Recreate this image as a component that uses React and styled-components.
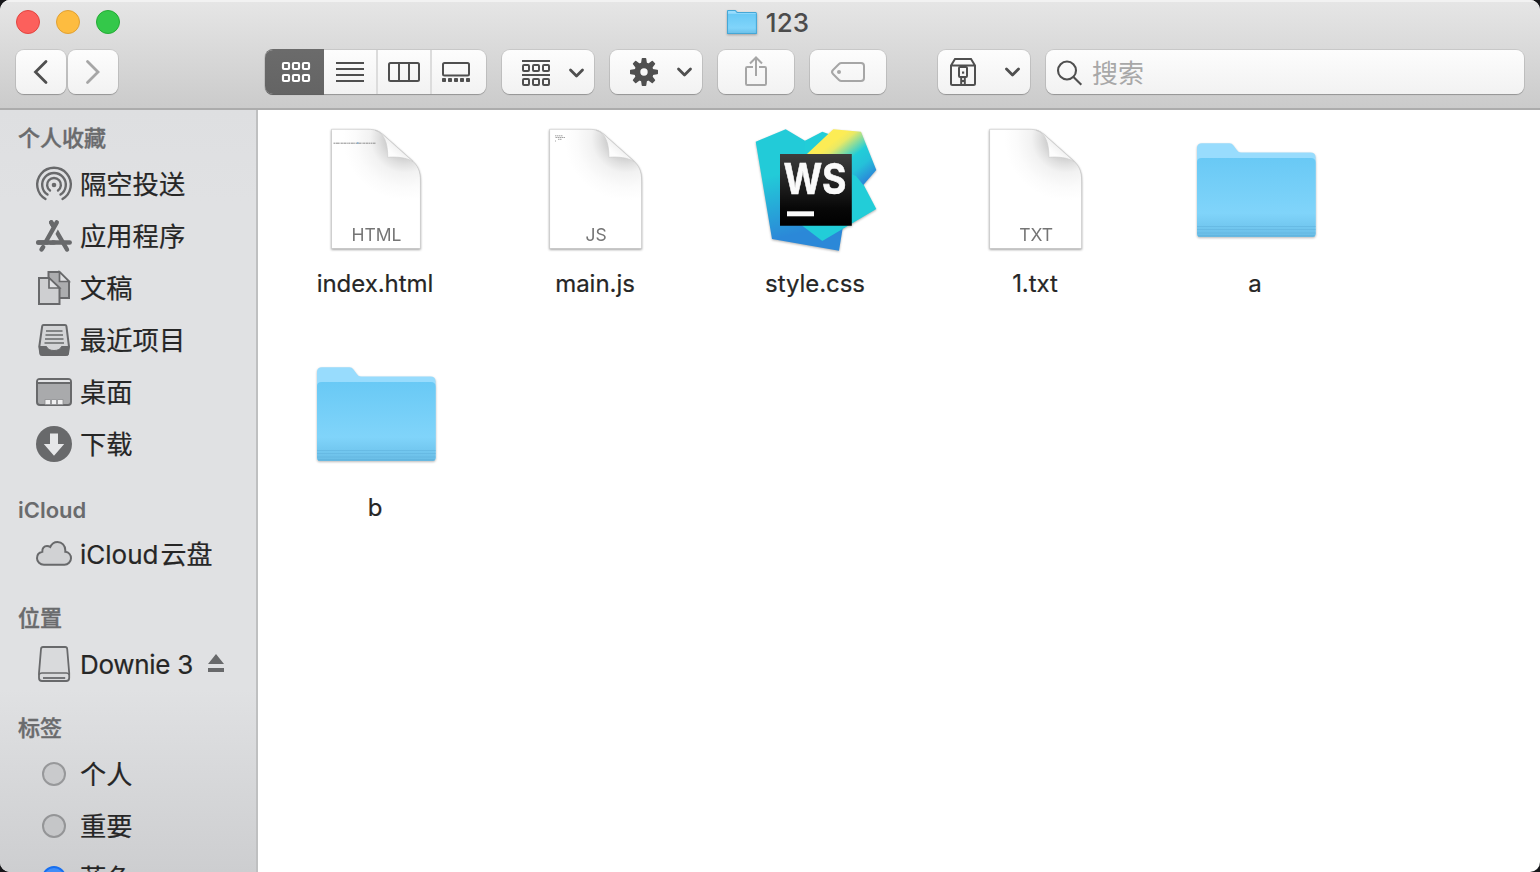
import React from "react";
import styled, { createGlobalStyle } from "styled-components";

const Global = createGlobalStyle`
  * { box-sizing: border-box; }
  body { margin: 0; background: #17171a; overflow: hidden; }
  svg { display: block; flex: none; overflow: visible; }
`;

const font = `Inter, "Noto Sans CJK SC", sans-serif`;
const ink = "#4f4f4f";
const faint = "#a6a6a6";
const side = "#68696b";

const Window = styled.div`
  width: 1540px;
  height: 872px;
  display: flex;
  flex-direction: column;
  overflow: hidden;
  border-radius: 10px;
  background: #fff;
  font-family: ${font};
  color: #262626;
`;

const Header = styled.header`
  height: 110px;
  flex: none;
  border-bottom: 2px solid #acacac;
  background: linear-gradient(#e6e6e6, #cbcbcb);
  box-shadow: inset 0 2px 0 #f2f2f2;
`;

const TitleRow = styled.div`
  position: relative;
  height: 44px;
  display: flex;
  align-items: center;
  justify-content: center;
  gap: 9px;
  padding-right: 4px;
`;

const Lights = styled.div`
  position: absolute;
  left: 16px;
  top: 10px;
  display: flex;
  gap: 16px;
`;

const Light = styled.span`
  width: 24px;
  height: 24px;
  border-radius: 50%;
  background: ${(p) => p.$fill};
  border: 1px solid ${(p) => p.$edge};
`;

const Title = styled.h1`
  margin: 2px 0 0;
  font-size: 26px;
  font-weight: 500;
  line-height: 32px;
  letter-spacing: 0.2px;
  color: #4c4c4c;
`;

const Toolbar = styled.div`
  display: flex;
  gap: 16px;
  padding: 6px 16px 0;
`;

const surface = `
  background: linear-gradient(#fdfdfd, #f2f2f2);
  box-shadow: 0 0 0 1px rgba(0, 0, 0, 0.08), 0 1px 1px 0 rgba(0, 0, 0, 0.22);
`;

const ButtonPair = styled.div`
  display: flex;
  gap: 2px;
  margin-right: 131px;
`;

const ToolButton = styled.button`
  width: ${(p) => p.$w}px;
  height: 44px;
  flex: none;
  display: flex;
  align-items: center;
  justify-content: ${(p) => (p.$menu ? "space-between" : "center")};
  padding: ${(p) => p.$pad || "0"};
  margin-left: ${(p) => p.$before || 0}px;
  border: 0;
  border-radius: 8px;
  ${surface}
`;

const Segments = styled.div`
  display: flex;
  width: 221px;
  height: 44px;
  border-radius: 8px;
  ${surface}
`;

const Segment = styled.button`
  width: ${(p) => p.$w}px;
  display: flex;
  align-items: center;
  justify-content: center;
  padding: ${(p) => p.$pad || "0"};
  border: 0;
  border-left: ${(p) => (p.$line ? "2px solid #dcdcdc" : "0")};
  background: transparent;
  ${(p) =>
    p.$on &&
    `background: linear-gradient(#6b6b6b, #646464); border-radius: 8px 0 0 8px; box-shadow: 0 -1px 0 #6b6b6b, 0 1px 0 #606060;`}
`;

const Search = styled.div`
  flex: 1;
  height: 44px;
  display: flex;
  align-items: center;
  gap: 10px;
  padding-left: 11px;
  border-radius: 8px;
  font-size: 26px;
  line-height: 40px;
  color: #a8a8a8;
  ${surface}
`;

const Placeholder = styled.span`
  margin-top: 4px;
`;

const Body = styled.div`
  flex: 1;
  min-height: 0;
  display: flex;
`;

const Sidebar = styled.nav`
  width: 258px;
  flex: none;
  overflow: hidden;
  border-right: 2px solid #bfc0c1;
  background: linear-gradient(#dedfe1, #e0e1e3 12%, #e0e1e3 76%, #cdced0);
`;

const Group = styled.section`
  padding-top: ${(p) => (p.$first ? 11 : 20)}px;
`;

const GroupTitle = styled.h2`
  margin: 0 0 4px;
  padding-left: 18px;
  height: 34px;
  font-size: 22px;
  font-weight: ${(p) => (p.$latin ? 600 : 500)};
  line-height: ${(p) => (p.$latin ? 38 : 34)}px;
  -webkit-text-stroke: ${(p) => (p.$latin ? 0 : 0.4)}px #6a6b6d;
  color: #6a6b6d;
`;

const Item = styled.div`
  height: 52px;
  display: flex;
  align-items: center;
  gap: 8px;
  padding-left: 36px;
  font-size: 26px;
  line-height: 40px;
  white-space: nowrap;
`;

const TagDot = styled.span`
  width: 24px;
  height: 24px;
  flex: none;
  margin: 0 6px 2px;
  border-radius: 50%;
  background: ${(p) => p.$fill};
  border: 2px solid ${(p) => p.$edge};
`;

const ItemLabel = styled.span`
  font-size: ${(p) => (p.$latin ? 26 : 26.3)}px;
  letter-spacing: ${(p) => p.$track || 0}px;
  -webkit-text-stroke: 0.2px #262626;
`;

const Thin = styled.span`
  margin-left: 2px;
`;

const EjectSlot = styled.span`
  margin-left: 7px;
  margin-top: -4px;
`;

const Files = styled.main`
  flex: 1;
  display: grid;
  grid-template-columns: repeat(5, 220px);
  grid-auto-rows: 224px;
  align-content: start;
  padding: 16px 0 0 8px;
`;

const File = styled.div`
  display: flex;
  flex-direction: column;
  align-items: center;
`;

const FileName = styled.span`
  margin: 14px 2px 0 0;
  font-size: 24px;
  line-height: 32px;
  letter-spacing: -0.05px;
  color: #262626;
  -webkit-text-stroke: 0.2px #262626;
`;

const Chevron = () => (
  <svg width="16" height="10" viewBox="-0.5 0 16 10" fill="none" stroke={ink} strokeWidth="2.8" strokeLinecap="round" strokeLinejoin="round">
    <path d="M2 2l6 6 6-6" />
  </svg>
);

const Arrow = ({ right }) => (
  <svg width="14" height="24" viewBox="0.5 0 14 24" fill="none" stroke={right ? faint : ink} strokeWidth="2.8" strokeLinecap="round" strokeLinejoin="miter">
    <path d={right ? "M2 1.5L12.500 12 2 22.5" : "M12.5 1.5L2 12l10.500 10.500"} />
  </svg>
);

const Cells = ({ y }) => [1, 11, 21].map((x) => <rect key={x} x={x} y={y} width="6" height="6" rx="1" />);

const GridIcon = () => (
  <svg width="28" height="20" fill="none" stroke="#fff" strokeWidth="2.2">
    <Cells y={1} />
    <Cells y={13} />
  </svg>
);

const ListIcon = () => (
  <svg width="28" height="20" fill={ink}>
    {[0, 6, 12, 18].map((y) => <rect key={y} y={y} width="28" height="2" />)}
  </svg>
);

const ColumnsIcon = () => (
  <svg width="32" height="20" fill="none" stroke={ink} strokeWidth="2">
    <rect x="1" y="1" width="30" height="18" rx="1.5" />
    <path d="M11 1v18M21 1v18" />
  </svg>
);

const GalleryIcon = () => (
  <svg width="28" height="20" fill={ink}>
    <rect x="1" y="1" width="26" height="12.500" rx="1.500" fill="none" stroke={ink} strokeWidth="2" />
    {[0, 6, 12, 18, 24].map((x) => <rect key={x} x={x} y="16" width="4" height="4" rx="0.800" />)}
  </svg>
);

const ArrangeIcon = () => (
  <svg width="28" height="26" fill="none" stroke={ink} strokeWidth="2">
    <path d="M0 1h28M0 15h28" />
    <Cells y={5} />
    <Cells y={19} />
  </svg>
);

const GearIcon = () => (
  <svg width="28" height="28" viewBox="-14 -14 28 28" fill={ink}>
    {[0, 45, 90, 135, 180, 225, 270, 315].map((a) => (
      <path key={a} d="M-3.200-7L-2.300-13.300Q-2.200-14-1.500-14H1.500Q2.200-14 2.300-13.300L3.200-7Z" transform={`rotate(${a})`} />
    ))}
    <circle r="6.700" fill="none" stroke={ink} strokeWidth="6" />
  </svg>
);

const ShareIcon = () => (
  <svg width="22" height="30" fill="none" stroke={faint} strokeWidth="2">
    <path d="M8 11H2.200Q1 11 1 12.200V27.800Q1 29 2.200 29H19.800Q21 29 21 27.800V12.200Q21 11 19.800 11H14" />
    <path d="M11 20V1.500M5 7.500l6-6 6 6" />
  </svg>
);

const TagIcon = () => (
  <svg width="34" height="20" fill="none" stroke={faint} strokeWidth="2">
    <path d="M10.500 1H30Q33 1 33 4V16Q33 19 30 19H10.500Q9 19 8 18L2 12Q0 10 2 8L8 2Q9 1 10.500 1Z" />
    <circle cx="8" cy="10" r="2" fill={faint} stroke="none" />
  </svg>
);

const ArchiveIcon = () => (
  <svg width="26" height="28" fill="none" stroke={ink} strokeWidth="2">
    <path d="M5 1H21L25 7.500V25.500Q25 27 23.500 27H2.500Q1 27 1 25.500V7.500ZM1 7.500H25" />
    <rect x="9" y="9" width="8" height="10" rx="1" />
    <path d="M11.200 19v8M14.800 19v8M11 23h4" />
    <rect x="12" y="13.500" width="2.200" height="2.200" fill={ink} stroke="none" />
  </svg>
);

const SearchIcon = () => (
  <svg width="25" height="25" viewBox="0 -0.500 25 25" fill="none" stroke={ink} strokeWidth="2.100">
    <circle cx="10" cy="10" r="9" />
    <path d="M16.500 16.500L24.300 24.300" />
  </svg>
);

const SideIcon = ({ children }) => (
  <svg width="36" height="36" fill="none" stroke={side} strokeWidth="2">
    {children}
  </svg>
);

const AirDrop = () => (
  <SideIcon>
    <g strokeWidth="2.400" strokeLinecap="round">
      <path d="M9.500 32A16.800 16.800 0 1 1 26.500 32" />
      <path d="M11.500 27.600A11.800 11.800 0 1 1 24.500 27.600" />
      <path d="M14 23.500A6.900 6.900 0 1 1 22 23.500" />
    </g>
    <circle cx="18" cy="18" r="2.300" fill={side} stroke="none" />
  </SideIcon>
);

const Applications = () => (
  <SideIcon>
    <g strokeWidth="4.400" strokeLinecap="round">
      <path d="M15.200 3.400L31 30.500" />
      <path d="M2.300 23.500H33.700" />
      <path d="M7.200 28L5.500 30.500" />
      <path d="M10.500 24.500L22 3.400" stroke="#e0e1e3" strokeWidth="6.500" strokeLinecap="butt" />
      <path d="M2.300 23.500H18" />
      <path d="M15.200 3.400L18 8M10 22.500L20.800 3.400" />
    </g>
  </SideIcon>
);

const Documents = () => (
  <SideIcon>
    <path d="M12.500 1H23.500L33 10.500V27H12.500Z" fill="#acadaf" />
    <path d="M23.500 1V10.500H33Z" fill="#e0e1e3" strokeWidth="1.700" />
    <path d="M3 7H13L23.500 17V33H3Z" fill="#cecfd1" />
    <path d="M13 7V17H23.500Z" fill="#e0e1e3" strokeWidth="1.700" />
  </SideIcon>
);

const Recents = () => (
  <SideIcon>
    <path d="M7.500 2H29Q30.200 2 30.400 3.200L33 23.500 32 30.500Q31.800 32 30 32H6.500Q4.700 32 4.400 30.500L3.300 23.500 6.200 3.200Q6.400 2 7.500 2Z" fill="#d3d4d6" />
    <path d="M10 8H26.500M9.500 12H27M9 16H27.500M8.500 20H28" strokeWidth="1.600" />
    <path d="M3.300 23.500H10.500Q12 27.500 18 27.500T25.500 23.500H33L32 32H4.300Z" fill={side} strokeWidth="1" />
  </SideIcon>
);

const Desktop = () => (
  <SideIcon>
    <rect x="1" y="4" width="34" height="26" rx="3" fill="#a9aaac" />
    <path d="M2 7V6Q2 5 3.500 5H32.500Q34 5 34 6V7Z" fill="#e4e5e7" stroke="none" />
    <path d="M1 8H35" strokeWidth="1.800" />
    <path d="M9 24.500H14.500V29.500H9ZM15.500 24.500H20.500V29.500H15.500ZM21.500 24.500H27V29.500H21.500Z" fill="#f0f0f1" stroke="#8d8e90" strokeWidth="0.800" />
  </SideIcon>
);

const Downloads = () => (
  <SideIcon>
    <circle cx="18" cy="17" r="18" fill={side} stroke="none" />
    <path d="M14 6.500H22V17H28.200L18 28.800 7.800 17H14Z" fill="#e6e7e9" stroke="none" />
  </SideIcon>
);

const Cloud = () => (
  <SideIcon>
    <path d="M8 27.700C4 27.700 1 24.800 1 21.200 1 18 3.200 15.500 6.300 14.800 6 11.500 8 9 11 9 12.300 9 13.300 9.400 14.200 10 15.600 6.900 18.300 5 21.500 5 26 5 29.300 8.500 29.300 13.200V14.800C32.700 15.300 35 18 35 21.300 35 24.800 32 27.700 28.500 27.700Z" fill="#d1d2d4" />
  </SideIcon>
);

const Drive = () => (
  <SideIcon>
    <path d="M7 0H29.200Q31 0 31.200 2L33.200 26V31Q33.200 34 30.200 34H6Q3 34 3 31V26L5 2Q5.200 0 7 0Z" fill="#d9dadc" strokeWidth="1.800" />
    <path d="M3.200 28Q3.500 26 6 26H30.200Q32.700 26 33 28" strokeWidth="1.500" />
    <path d="M7 31H29.200" strokeWidth="1.800" />
  </SideIcon>
);

const Eject = () => (
  <svg width="16" height="18" fill={side}>
    <path d="M8 0L16 10H0ZM0 14H16V18H0Z" />
  </svg>
);

const Folder = ({ small }) => (
  <svg
    width={small ? 30 : 128}
    height={small ? 24 : 128}
    viewBox={small ? "5 21 119 94" : "0 4 128 128"}
    preserveAspectRatio={small ? "none" : undefined}
    style={{ filter: "drop-shadow(0 1px 0.8px rgba(0,0,0,.28))" }}
  >
    <defs>
      <linearGradient id={small ? "frontSmall" : "front"} x2="0" y2="1">
        <stop offset="0" stopColor="#69c9f5" />
        <stop offset=".7" stopColor="#80d4fa" />
        <stop offset=".85" stopColor="#74c9f1" />
        <stop offset="1" stopColor="#6abde6" />
      </linearGradient>
    </defs>
    <path d="M5 26Q5 21.300 10 21.300H37.500Q40 21.300 41.500 23.500L45 28.200Q46.500 30.400 49 30.400H118.500Q123.600 30.400 123.600 35.500V112Q123.600 114.700 121 114.700H8Q5 114.700 5 112Z" fill="#98dcfd" />
    <path d="M5 40Q5 36 9.500 36H119Q123.600 36 123.600 40.500V111.500Q123.600 114.700 120.500 114.700H8Q5 114.700 5 111.500Z" fill={`url(#${small ? "frontSmall" : "front"})`} />
    {small ? (
      <path d="M7 26Q7 23 10 23H37.500L45 30.400H118.500Q121.600 30.400 121.600 35.500V112.700H7Z" fill="none" stroke="#45a7d6" strokeWidth="4" />
    ) : (
      <>
        <path d="M5 104.500H123.600M5 107.500H123.600M5 111H123.600" stroke="#63b6df" strokeWidth="0.700" />
        <path d="M6 114H122.600" stroke="#5aaed8" strokeWidth="1" />
      </>
    )}
  </svg>
);

const Page = ({ id, left, shift, kind, preview }) => (
  <svg width="128" height="128" viewBox="0 0 128 128" style={{ filter: "drop-shadow(0 1px 1px rgba(0,0,0,.4))" }}>
    <defs>
      <radialGradient id={`fade${id}`} gradientUnits="userSpaceOnUse" cx="93" cy="12" r="62">
        <stop offset=".3" stopColor="#cdcdcd" />
        <stop offset=".42" stopColor="#e0e0e0" />
        <stop offset=".56" stopColor="#f2f2f2" />
        <stop offset=".8" stopColor="#fbfbfb" />
        <stop offset="1" stopColor="#fff" />
      </radialGradient>
      <linearGradient id={`curl${id}`} x1="0" y1="1" x2=".6" y2=".4">
        <stop offset="0" stopColor="#fff" />
        <stop offset=".6" stopColor="#fdfdfd" />
        <stop offset="1" stopColor="#ececec" />
      </linearGradient>
    </defs>
    <g transform={`translate(${shift} 0)`}>
      <path
        d={`M${left - shift} 3.300H56C63 3.300 67 5 72 9.500L99 33.500C106 39.500 108.400 45 108.400 55V122.500H${left - shift}Z`}
        fill={`url(#fade${id})`}
        stroke="#bdbdbd"
        strokeWidth="0.500"
      />
      <path d="M63 4.200C72 7 76 17 75.700 31.300 85 30.500 94 31.500 101 35.500L73 10.500C69 7 67 5.500 63 4.200Z" fill={`url(#curl${id})`} stroke="#c9c9c9" strokeWidth="0.600" />
    </g>
    {preview}
    <text x={(left + 108.4 + shift) / 2 + 0.5} y="115" textAnchor="middle" fontFamily={font} fontSize="17.500" fontWeight="400" fill="#757575">
      {kind}
    </text>
  </svg>
);

const HtmlPreview = (
  <g fill="none" stroke="#8b8b8b" strokeWidth="1">
    <path d="M21.500 17.200H63.500" strokeDasharray="2 .5 3 .4 1 .5" />
    <path d="M45 17h1.500" stroke="#5a9bd0" />
  </g>
);

const JsPreview = (
  <path d="M23 9.800H31M23.500 11.500H33M26 13.300H30M23 15h1" fill="none" stroke="#999" strokeWidth=".9" strokeDasharray="1.500 .5" />
);

const WebStorm = () => (
  <svg width="128" height="128" viewBox="0 0 128 128" style={{ filter: "drop-shadow(0 1px 1px rgba(0,0,0,.3))" }}>
    <defs>
      <linearGradient id="wsLeft" gradientUnits="userSpaceOnUse" x1="40" y1="35" x2="62" y2="122">
        <stop offset=".1" stopColor="#22cbd8" />
        <stop offset=".8" stopColor="#2b88d8" />
      </linearGradient>
      <linearGradient id="wsTop" gradientUnits="userSpaceOnUse" x1="79" y1="10" x2="116" y2="57">
        <stop offset=".1" stopColor="#fcec55" />
        <stop offset=".2" stopColor="#e8e966" />
        <stop offset=".5" stopColor="#22cdd8" />
        <stop offset=".7" stopColor="#25c1d9" />
        <stop offset="1" stopColor="#2b7fd8" />
      </linearGradient>
      <linearGradient id="wsTile" x2="0" y2="1">
        <stop offset="0" stopColor="#3d3d3d" />
        <stop offset=".75" stopColor="#080808" />
        <stop offset="1" stopColor="#000" />
      </linearGradient>
    </defs>
    <path d="M3.700 15.700L33.700 3.300 53 14.700 75 20 90.700 102 87 124.700 20 113Z" fill="url(#wsLeft)" />
    <path d="M53 14.700L70.300 5.700 82 10 106 48 124.300 83 70.300 115 48 98Z" fill="#22cdd8" />
    <path d="M81.300 3.300L109 5.700 124.300 44 111.300 59 104 50 54.700 28.300Z" fill="url(#wsTop)" />
    <path d="M28 28H99.800V99.800H28Z" fill="url(#wsTile)" />
    <text x="31.500" y="68" fontFamily="Inter, sans-serif" fontSize="42" fontWeight="700" textLength="63" lengthAdjust="spacingAndGlyphs" fill="#fafafa" stroke="#fafafa" strokeWidth="0.600">WS</text>
    <path d="M35 85.300H62V90.300H35Z" fill="#fafafa" />
  </svg>
);

const favorites = [
  [AirDrop, "隔空投送"],
  [Applications, "应用程序"],
  [Documents, "文稿"],
  [Recents, "最近项目"],
  [Desktop, "桌面"],
  [Downloads, "下载"],
];

const tags = [
  ["个人", "#c9cacc", "#97989a"],
  ["重要", "#c5c6c8", "#949597"],
  ["蓝色", "#408df8", "#176ff0"],
];

const files = [
  ["index.html", <Page id="Html" left={19.5} shift={0} kind="HTML" preview={HtmlPreview} />],
  ["main.js", <Page id="Js" left={17.6} shift={1.2} kind="JS" preview={JsPreview} />],
  ["style.css", <WebStorm />],
  ["1.txt", <Page id="Txt" left={17.6} shift={1.2} kind="TXT" />],
  ["a", <Folder />],
  ["b", <Folder />],
];

export default function App() {
  return (
    <Window>
      <Global />
      <Header>
        <TitleRow>
          <Lights>
            <Light $fill="#fc605c" $edge="#e2443f" />
            <Light $fill="#fdbc40" $edge="#e0a033" />
            <Light $fill="#34c84a" $edge="#24ab35" />
          </Lights>
          <Folder small />
          <Title>123</Title>
        </TitleRow>
        <Toolbar>
          <ButtonPair>
            <ToolButton $w={50}><Arrow /></ToolButton>
            <ToolButton $w={50}><Arrow right /></ToolButton>
          </ButtonPair>
          <Segments>
            <Segment $w={59} $on $pad="0 0 0 3px"><GridIcon /></Segment>
            <Segment $w={52}><ListIcon /></Segment>
            <Segment $w={54} $line><ColumnsIcon /></Segment>
            <Segment $w={56} $line $pad="0 6px 0 0"><GalleryIcon /></Segment>
          </Segments>
          <ToolButton $w={92} $menu $pad="2px 10px 0 20px"><ArrangeIcon /><Chevron /></ToolButton>
          <ToolButton $w={92} $menu $pad="0 10px 0 20px"><GearIcon /><Chevron /></ToolButton>
          <ToolButton $w={76} $pad="0 0 2px"><ShareIcon /></ToolButton>
          <ToolButton $w={76}><TagIcon /></ToolButton>
          <ToolButton $w={92} $menu $pad="0 10px 0 12px" $before={36}><ArchiveIcon /><Chevron /></ToolButton>
          <Search><SearchIcon /><Placeholder>搜索</Placeholder></Search>
        </Toolbar>
      </Header>
      <Body>
        <Sidebar>
          <Group $first>
            <GroupTitle>个人收藏</GroupTitle>
            {favorites.map(([Icon, label]) => (
              <Item key={label}><Icon /><ItemLabel>{label}</ItemLabel></Item>
            ))}
          </Group>
          <Group>
            <GroupTitle $latin>iCloud</GroupTitle>
            <Item><Cloud /><ItemLabel $latin>iCloud<Thin>云盘</Thin></ItemLabel></Item>
          </Group>
          <Group>
            <GroupTitle>位置</GroupTitle>
            <Item><Drive /><ItemLabel $latin $track={-0.3}>Downie 3</ItemLabel><EjectSlot><Eject /></EjectSlot></Item>
          </Group>
          <Group>
            <GroupTitle>标签</GroupTitle>
            {tags.map(([label, fill, edge]) => (
              <Item key={label}><TagDot $fill={fill} $edge={edge} /><ItemLabel>{label}</ItemLabel></Item>
            ))}
          </Group>
        </Sidebar>
        <Files>
          {files.map(([name, icon]) => (
            <File key={name}>{icon}<FileName>{name}</FileName></File>
          ))}
        </Files>
      </Body>
    </Window>
  );
}
